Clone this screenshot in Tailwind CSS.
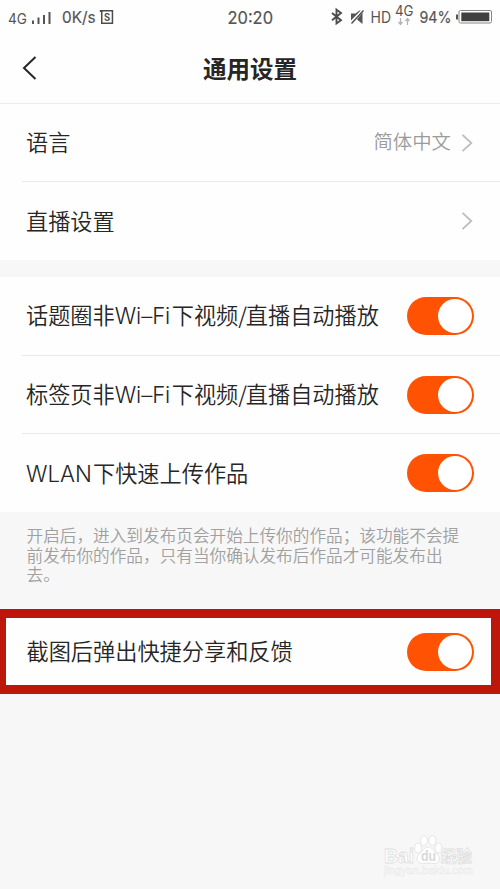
<!DOCTYPE html>
<html lang="zh-CN">
<head>
<meta charset="utf-8">
<title>通用设置</title>
<script src="https://cdn.jsdelivr.net/npm/@tailwindcss/browser@4"></script>
</head>
<body class="bg-[#f7f7f7] w-[500px] h-[889px] overflow-hidden relative font-['Noto_Sans_CJK_SC',sans-serif] font-[350] text-[#262626]">
<div class="h-[104px] bg-[#fefefe] border-b border-[#ededed]">
  <div class="h-9">
    <svg class="block w-[500px] h-9 font-normal" viewBox="0 0 500 36" fill="#555" font-family="Inter, sans-serif">
      <text x="8" y="24" font-size="14.5" textLength="19" lengthAdjust="spacingAndGlyphs">4G</text>
      <path d="M32 20.500h2v3.500h-2zM37.500 17.500h2v6.500h-2zM43 15h2v9h-2zM48.500 12h2v12h-2z"/>
      <text x="62" y="23" font-size="16" stroke="#555" stroke-width=".2" textLength="33.500" lengthAdjust="spacingAndGlyphs">0K/s</text>
      <path d="M99.800 10H113.200V24H101V12H99.800zM102.500 11.600V22.400H111.700V11.600z" fill="#4c4c4c" fill-rule="evenodd"/>
      <text x="104" y="20.700" font-size="10" font-weight="700" textLength="6.200" lengthAdjust="spacingAndGlyphs">S</text>
      <text x="227.500" y="24" font-size="17.500" stroke="#555" stroke-width=".2" textLength="45.500" lengthAdjust="spacingAndGlyphs">20:20</text>
      <path d="M332 13l9 7.200-4.500 3.300V9.600l4.500 3.400-9 7.200" fill="none" stroke="#4c4c4c" stroke-width="1.900"/>
      <path d="M351 13.500h4.500L359.500 10.500h1.200L351 20.500zM362.500 12.500v11.500l-5.500-4.500z"/>
      <path d="M351.500 23.500L363.500 10.500" stroke="#4c4c4c" stroke-width="1.400"/>
      <text x="370.500" y="22.700" font-size="16.500" textLength="20.500" lengthAdjust="spacingAndGlyphs">HD</text>
      <text x="395" y="16" font-size="14" textLength="18.500" lengthAdjust="spacingAndGlyphs">4G</text>
      <path d="M400.500 18v6M398.500 22l2 2.500 2-2.500M407.500 25v-6M405.500 21l2-2.500 2 2.500" fill="none" stroke="#b5b5b5" stroke-width="1.300"/>
      <text x="419.500" y="23" font-size="16" stroke="#555" stroke-width=".2" textLength="32" lengthAdjust="spacingAndGlyphs">94%</text>
      <path d="M456 14.500h2v5h-2z"/>
      <rect x="459" y="10.500" width="32.500" height="12.500" rx="1.500" fill="#fff" stroke="#858585"/>
      <rect x="461.300" y="12.500" width="28" height="8.700" fill="#404040"/>
    </svg>
  </div>
  <div class="h-[66px] flex items-center relative">
    <svg class="absolute left-[22px] top-5" width="16" height="24" fill="none" stroke="#262626" stroke-width="2"><path d="M13.500 1L2 12l11.500 11"/></svg>
    <h1 class="w-full text-center text-[23.5px] font-bold leading-none">通用设置</h1>
  </div>
</div>
<main>
  <section class="bg-[#fefefe] pl-[22px] h-[156px] text-[22.2px]">
    <div class="h-[78px] flex items-center border-b border-[#e9e9e9] pl-1 pr-[27px]">
      <span class="grow pb-[2px]">语言</span><span class="text-[19.4px] text-[#9b9b9b] pb-[3px]">简体中文</span>
      <svg class="ml-[10px]" width="12" height="18" fill="none" stroke="#bdbdbd" stroke-width="1.800"><path d="M1.500 .800L10.300 9l-8.800 8.200"/></svg>
    </div>
    <div class="h-[78px] flex items-center pl-1 pr-[27px]">
      <span class="grow pb-px">直播设置</span>
      <svg width="12" height="18" fill="none" stroke="#bdbdbd" stroke-width="1.800"><path d="M1.500 .800L10.300 9l-8.800 8.200"/></svg>
    </div>
  </section>
  <section class="mt-[17px] bg-[#fefefe] pl-[22px] h-[235px] text-[22.2px]">
    <div class="h-[79px] flex items-center border-b border-[#e9e9e9] pl-1 pr-[26px]">
      <span class="grow whitespace-nowrap pb-px">话题圈非<span class="inline-block w-[57px] font-['Inter'] tracking-[-0.1px]">Wi–Fi</span>下视频<span class="inline-block w-[7.500px]">/</span>直播自动播放</span>
      <span class="w-[67px] h-[38px] rounded-full bg-[#ff5203] p-[2px] flex justify-end"><span class="size-[34px] rounded-full bg-white"></span></span>
    </div>
    <div class="h-[78px] flex items-center border-b border-[#e9e9e9] pl-1 pr-[26px]">
      <span class="grow whitespace-nowrap">标签页非<span class="inline-block w-[57px] font-['Inter'] tracking-[-0.1px]">Wi–Fi</span>下视频<span class="inline-block w-[7.500px]">/</span>直播自动播放</span>
      <span class="w-[67px] h-[38px] rounded-full bg-[#ff5203] p-[2px] flex justify-end"><span class="size-[34px] rounded-full bg-white"></span></span>
    </div>
    <div class="h-[78px] flex items-center pl-1 pr-[26px]">
      <span class="grow whitespace-nowrap"><span class="inline-block w-[67px] font-['Inter']">WLAN</span>下快速上传作品</span>
      <span class="w-[67px] h-[38px] rounded-full bg-[#ff5203] p-[2px] flex justify-end"><span class="size-[34px] rounded-full bg-white"></span></span>
    </div>
  </section>
  <p class="h-[97px] pt-[14px] pl-[26.500px] text-[16.65px] leading-[19.5px] text-[#a0a0a0] whitespace-nowrap">开启后，进入到发布页会开始上传你的作品；该功能不会提<br>前发布你的作品，只有当你确认发布后作品才可能发布出<br>去。</p>
  <section class="h-[85px] bg-[#fefefe] border-y-[9px] border-l-[6px] border-r-[9px] border-[#bd170b] flex items-center pl-[20.500px] pr-[17px] text-[22.2px]">
    <span class="grow pb-px">截图后弹出快捷分享和反馈</span>
    <span class="w-[67px] h-[38px] rounded-full bg-[#ff5203] p-[2px] flex justify-end"><span class="size-[34px] rounded-full bg-white"></span></span>
  </section>
</main>
<svg class="absolute left-[380px] top-[832px]" width="100" height="48" font-family="Liberation Sans, sans-serif" fill="#fff" stroke="#dedede" stroke-width=".8">
  <text x="4" y="31" font-size="21" font-weight="700" textLength="30" lengthAdjust="spacingAndGlyphs">Bai</text>
  <ellipse cx="38" cy="16" rx="3.500" ry="5"/><ellipse cx="44" cy="8.500" rx="3.500" ry="5"/><ellipse cx="52.500" cy="8.500" rx="3.500" ry="5"/><ellipse cx="58.500" cy="16" rx="3.500" ry="5"/>
  <path d="M48 15c-4 0-5 4-8.500 7-5 4-2 10 3 9.500 4-.5 7-.5 11 0 6 .5 8-5.500 3.500-9.500C53.500 19 52 15 48 15z"/>
  <text x="41" y="29" font-size="14" font-weight="700" textLength="15" lengthAdjust="spacingAndGlyphs" fill="#d8d8d8" stroke="none">du</text>
  <text x="61" y="30" font-size="16" font-weight="700" font-family="Noto Sans CJK SC, sans-serif" textLength="31" lengthAdjust="spacingAndGlyphs">经验</text>
  <text x="4" y="42" font-size="10" textLength="89" lengthAdjust="spacingAndGlyphs" fill="#fcfcfc" stroke="#e7e7e7" stroke-width=".4">jingyan.baidu.com</text>
</svg>
</body>
</html>
